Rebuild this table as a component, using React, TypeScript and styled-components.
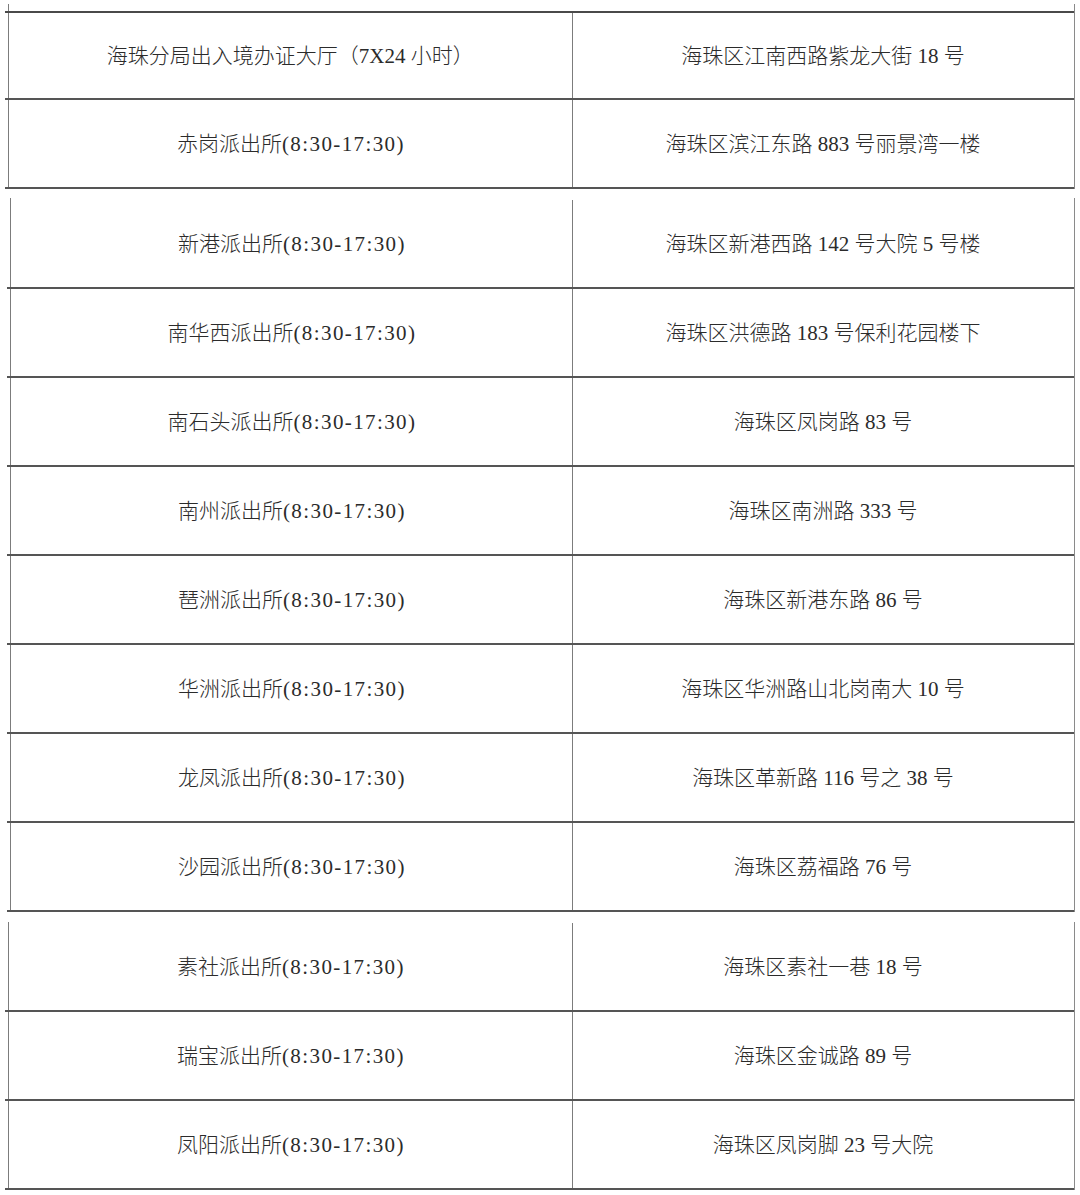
import { FC } from 'react';
import styled, { createGlobalStyle } from 'styled-components';

const GlobalStyle = createGlobalStyle`
    html, body {
        margin: 0;
        padding: 0;
        background: #ffffff;
    }
    body {
        font-family: "Liberation Serif", "Noto Sans CJK SC", serif;
        color: #2b2b2b;
    }
`;

type Office = { name: string; hours?: string; address: string };

const HOURS = '(8:30-17:30)';

const sections: Office[][] = [
    [
        { name: '海珠分局出入境办证大厅（7X24 小时）', address: '海珠区江南西路紫龙大街 18 号' },
        { name: '赤岗派出所', hours: HOURS, address: '海珠区滨江东路 883 号丽景湾一楼' },
    ],
    [
        { name: '新港派出所', hours: HOURS, address: '海珠区新港西路 142 号大院 5 号楼' },
        { name: '南华西派出所', hours: HOURS, address: '海珠区洪德路 183 号保利花园楼下' },
        { name: '南石头派出所', hours: HOURS, address: '海珠区凤岗路 83 号' },
        { name: '南州派出所', hours: HOURS, address: '海珠区南洲路 333 号' },
        { name: '琶洲派出所', hours: HOURS, address: '海珠区新港东路 86 号' },
        { name: '华洲派出所', hours: HOURS, address: '海珠区华洲路山北岗南大 10 号' },
        { name: '龙凤派出所', hours: HOURS, address: '海珠区革新路 116 号之 38 号' },
        { name: '沙园派出所', hours: HOURS, address: '海珠区荔福路 76 号' },
    ],
    [
        { name: '素社派出所', hours: HOURS, address: '海珠区素社一巷 18 号' },
        { name: '瑞宝派出所', hours: HOURS, address: '海珠区金诚路 89 号' },
        { name: '凤阳派出所', hours: HOURS, address: '海珠区凤岗脚 23 号大院' },
    ],
];

// page breaks in the scanned table shift each piece a little
const layout = [
    { left: 8, lead: 7, gap: 4, top: true },
    { left: 10, lead: 2, gap: 9, top: false },
    { left: 8, lead: 1, gap: 10, top: false },
];

const Page = styled.div`
    width: 1080px;
    display: flex;
    flex-direction: column;
`;

const Segment = styled.div<{ $left: number; $lead: number; $gap: number }>`
    box-sizing: border-box;
    margin-top: ${p => p.$gap}px;
    margin-left: ${p => p.$left}px;
    width: ${p => 1074.5 - p.$left}px;
    padding-top: ${p => p.$lead}px;
    border-left: 1.5px solid #7c7c7c;
    border-right: 1.5px solid #8a8a8a;
    display: flex;
    flex-direction: column;
`;

const Row = styled.div<{ $top?: boolean; $left: number }>`
    box-sizing: border-box;
    height: 89px;
    margin-left: -4px;
    padding-left: 4px;
    display: grid;
    grid-template-columns: ${p => 570.5 - p.$left}px 1fr;
    border-top: ${p => (p.$top ? '2px solid #4a4a4a' : 'none')};
    border-bottom: 2px solid #555555;
`;

const Cell = styled.div<{ $divider?: boolean }>`
    display: flex;
    align-items: center;
    justify-content: center;
    padding-top: 3px;
    font-size: 21px;
    font-weight: 300;
    white-space: nowrap;
    border-left: ${p => (p.$divider ? '1.5px solid #7c7c7c' : 'none')};
`;

const Text = styled.span`
    line-height: 1.3;
`;

const Hours = styled.span`
    font-weight: 400;
    letter-spacing: 1.4px;
    margin-right: -1.4px;
`;

const App: FC = () => {
    return (
        <Page>
            <GlobalStyle />
            {sections.map((rows, i) => (
                <Segment key={i} $left={layout[i].left} $lead={layout[i].lead} $gap={layout[i].gap}>
                    {rows.map((office, j) => (
                        <Row key={office.name} $left={layout[i].left} $top={layout[i].top && j === 0}>
                            <Cell>
                                <Text>
                                    {office.name}
                                    {office.hours && <Hours>{office.hours}</Hours>}
                                </Text>
                            </Cell>
                            <Cell $divider>
                                <Text>{office.address}</Text>
                            </Cell>
                        </Row>
                    ))}
                </Segment>
            ))}
        </Page>
    );
};

export default App;
